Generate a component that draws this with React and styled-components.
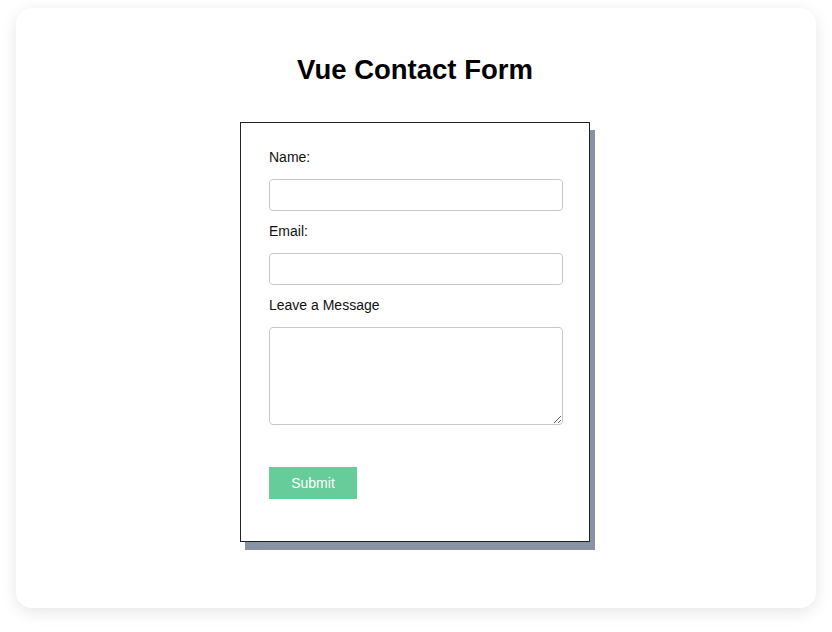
import React from "react";
import styled, { createGlobalStyle } from "styled-components";

const GlobalStyle = createGlobalStyle`
	html, body {
		margin: 0;
		padding: 0;
		background: #fff;
		font-family: "Liberation Sans", Arial, sans-serif;
	}
`;

const Page = styled.div`
	width: 832px;
	height: 632px;
	padding: 8px 16px 24px;
	box-sizing: border-box;
`;

const Card = styled.div`
	height: 600px;
	background: #fff;
	border-radius: 16px;
	box-shadow: 0 4px 16px rgba(0, 0, 0, 0.1);
	padding: 46px 2px 0 0;
	box-sizing: border-box;
	display: flex;
	flex-direction: column;
	align-items: center;
`;

const Title = styled.h1`
	margin: 0 0 36px;
	font-size: 27.5px;
	line-height: 32px;
	font-weight: 700;
	color: #000;
`;

const FormBox = styled.form`
	width: 350px;
	box-sizing: border-box;
	border: 1px solid #222;
	padding: 26px 26px 42px 28px;
	background: #fff;
	box-shadow: 5px 8px 0 #8893a3;
	display: flex;
	flex-direction: column;
	align-items: flex-start;
`;

const Label = styled.label`
	display: block;
	font-size: 14px;
	line-height: 16px;
	color: #111;
	margin-bottom: 14px;
`;

const Field = styled.input`
	width: 294px;
	height: 32px;
	box-sizing: border-box;
	border: 1px solid #c8c8c8;
	border-radius: 4px;
	margin: 0 0 12px;
	padding: 4px 8px;
	font-family: inherit;
	font-size: 14px;
	outline: none;
`;

const Message = styled.textarea`
	width: 294px;
	height: 98px;
	box-sizing: border-box;
	border: 1px solid #c8c8c8;
	border-radius: 4px;
	margin: 0 0 42px;
	padding: 4px 8px;
	font-family: inherit;
	font-size: 14px;
	outline: none;
	display: block;
`;

const Submit = styled.button`
	width: 88px;
	height: 32px;
	border: none;
	border-radius: 0;
	background: #66cc99;
	color: #fff;
	font-family: inherit;
	font-size: 14px;
	cursor: pointer;
	padding: 0;
`;

const App = () => {
	return (
		<Page>
			<GlobalStyle />
			<Card>
				<Title>Vue Contact Form</Title>
				<FormBox onSubmit={(e) => e.preventDefault()}>
					<Label htmlFor='name'>Name:</Label>
					<Field id='name' type='text' />
					<Label htmlFor='email'>Email:</Label>
					<Field id='email' type='email' />
					<Label htmlFor='message'>Leave a Message</Label>
					<Message id='message' />
					<Submit type='submit'>Submit</Submit>
				</FormBox>
			</Card>
		</Page>
	);
};

export default App;
